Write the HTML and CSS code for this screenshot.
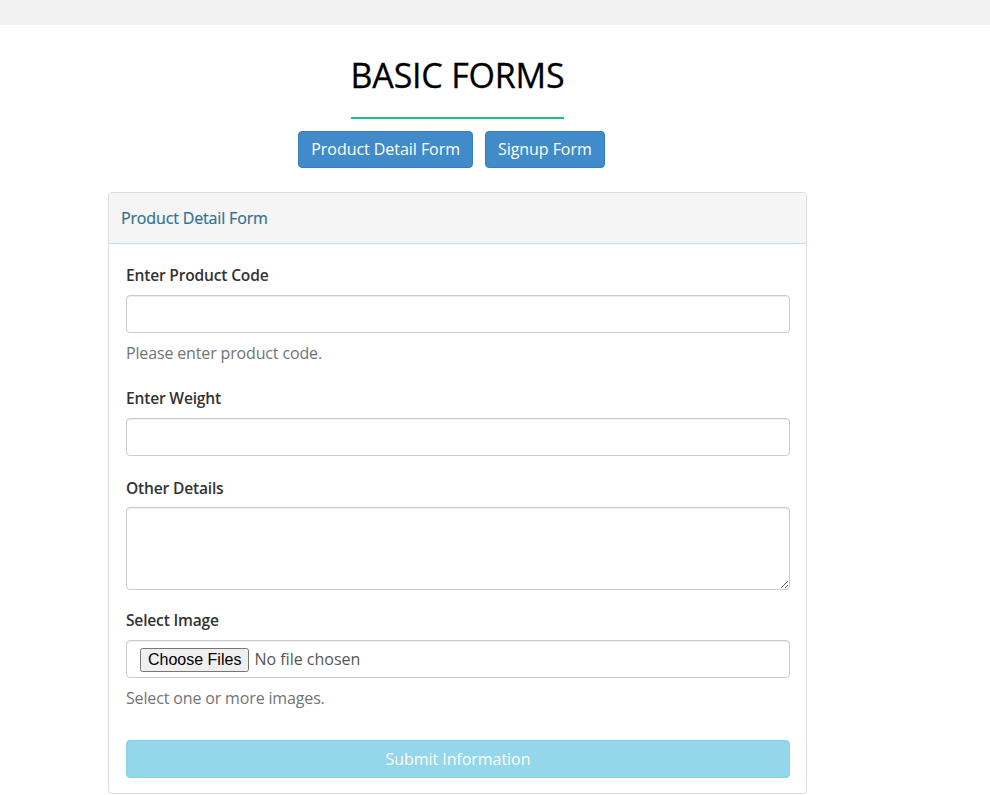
FILE: index.html
```html
<!DOCTYPE html>
<html lang="en">
<head>
<meta charset="utf-8">
<title>Basic Forms</title>
<link rel="stylesheet" href="styles.css">
</head>
<body>
<div class="topbar"></div>
<main class="wrap">
  <div class="title-row"><h1 class="title">BASIC FORMS</h1></div>
  <div class="tabs">
    <button class="btn btn-primary" type="button">Product Detail Form</button>
    <button class="btn btn-primary" type="button">Signup Form</button>
  </div>
  <section class="panel">
    <div class="panel-heading">Product Detail Form</div>
    <form class="panel-body">
      <div class="group group-first">
        <label class="label" for="code">Enter Product Code</label>
        <input class="control" id="code" type="text">
        <p class="help">Please enter product code.</p>
      </div>
      <div class="group">
        <label class="label" for="weight">Enter Weight</label>
        <input class="control" id="weight" type="text">
      </div>
      <div class="group group-area">
        <label class="label label-tight" for="details">Other Details</label>
        <textarea class="control area" id="details"></textarea>
      </div>
      <div class="group">
        <label class="label" for="img">Select Image</label>
        <input class="control file" id="img" type="file" multiple>
        <p class="help">Select one or more images.</p>
      </div>
      <button class="btn btn-submit" type="submit" disabled>Submit Information</button>
    </form>
  </section>
</main>
</body>
</html>
```

FILE: styles.css
```css
* { box-sizing: border-box; }
html, body { margin: 0; padding: 0; background: #fff; }
body {
  font-family: "Open Sans", "Noto Sans", sans-serif;
  font-size: 16px;
  color: #333;
}
.topbar { height: 25px; background: #f2f2f2; }
.wrap { width: 699px; margin-left: 108px; }
.title-row { text-align: center; padding-top: 30px; }
.title {
  display: inline-block;
  margin: 0;
  font-weight: 500;
  font-size: 34px;
  line-height: 40px;
  letter-spacing: -0.2px;
  color: #000;
  -webkit-text-stroke: 0.3px #000;
  padding-bottom: 22px;
  border-bottom: 2px solid #19c37d;
}
.tabs {
  display: flex;
  justify-content: center;
  gap: 12px;
  padding-right: 12px;
  margin-top: 12px;
}
.btn {
  font-family: "Open Sans", "Noto Sans", sans-serif;
  font-size: 16px;
  line-height: 23px;
  padding: 6px 12px;
  border-radius: 4px;
  border: 1px solid transparent;
  letter-spacing: -0.05px;
  cursor: pointer;
}
.btn-primary { background: #428bca; border-color: #357ebd; color: #fff; }
.panel {
  margin-top: 24px;
  border: 1px solid #ddd;
  border-radius: 4px;
  box-shadow: 0 1px 1px rgba(0,0,0,.05);
}
.panel-heading {
  background: #f5f5f5;
  color: #31708f;
  font-weight: 500;
  letter-spacing: -0.15px;
  -webkit-text-stroke: 0.2px #31708f;
  padding: 13px 12px;
  line-height: 24px;
  border-bottom: 1px solid #bce8f1;
  border-radius: 3px 3px 0 0;
}
.panel-body { padding: 19px 16px 15px 17px; }
.group { margin-bottom: 20px; }
.group-first { margin-bottom: 21px; }
.group-area { margin-bottom: 18px; }
.label {
  display: block;
  font-weight: 600;
  font-size: 15.6px;
  letter-spacing: -0.2px;
  line-height: 24px;
  color: #333;
  margin-bottom: 8px;
}
.label-tight { margin-bottom: 7px; }
.control {
  display: block;
  width: 100%;
  height: 38px;
  border: 1px solid #ccc;
  border-radius: 4px;
  background: #fff;
  font-family: "Open Sans", sans-serif;
  font-size: 16px;
  color: #555;
  padding: 6px 12px;
  box-shadow: inset 0 1px 1px rgba(0,0,0,.075);
}
.area { height: 83px; resize: vertical; }
.file { padding: 6px 13px; line-height: 24px; }
.file::file-selector-button {
  font-family: "Liberation Sans", Arial, sans-serif;
  font-size: 16px;
  margin-right: 5px;
}
.help { margin: 8px 0 0; line-height: 24px; color: #737373; letter-spacing: -0.15px; }
.btn-submit {
  display: block;
  width: 100%;
  margin-top: 30px;
  line-height: 24px;
  background: #94d6ea;
  border-color: #87d1e7;
  color: #fff;
  cursor: not-allowed;
}
```
